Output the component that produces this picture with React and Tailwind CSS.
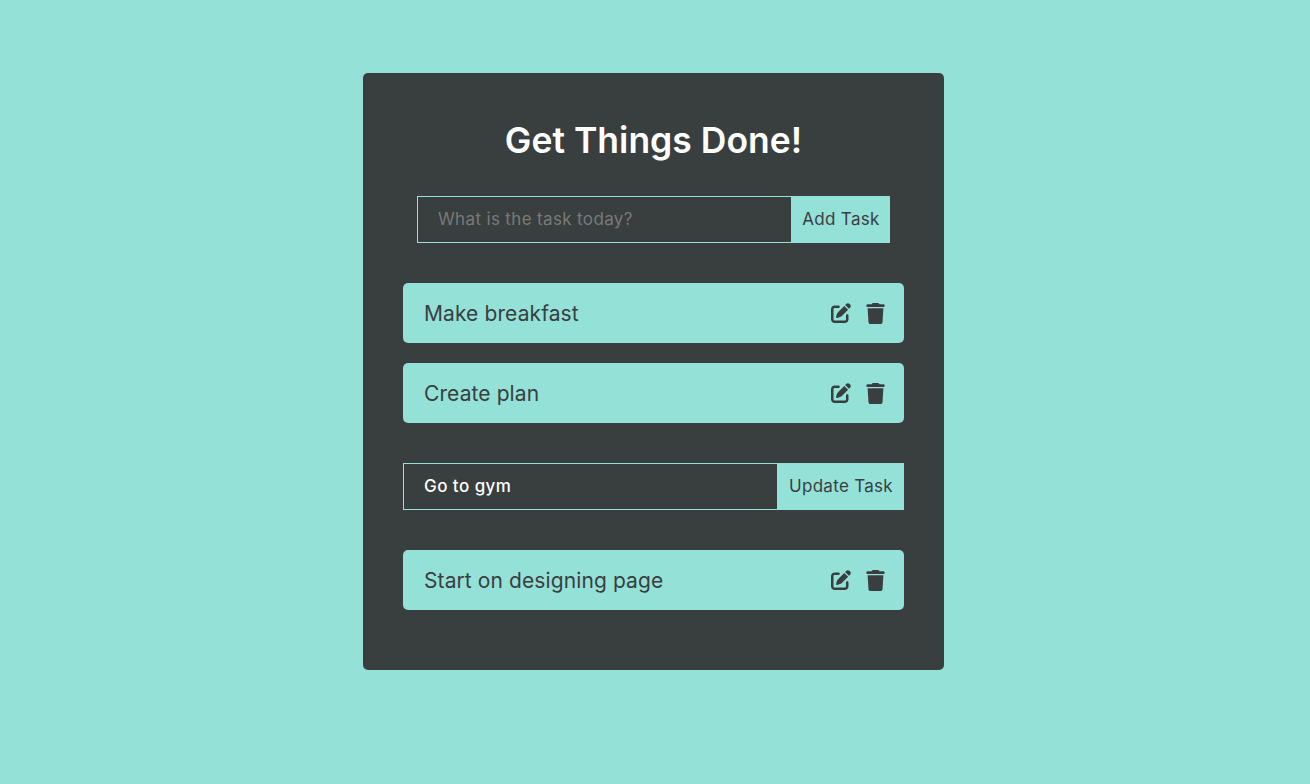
import React from 'react';
import { FaPenToSquare, FaTrash } from 'react-icons/fa6';

const TaskRow = ({ label }) => (
  <div className="flex items-center justify-between h-[60px] rounded-[5px] bg-[#94e1d8] pl-[21px] pr-[19px] text-[#393e3f]">
    <p className="pt-[2px] text-[21px] tracking-[0.1px]">{label}</p>
    <div className="flex items-center gap-[15px]">
      <FaPenToSquare className="w-5 h-5" />
      <FaTrash className="w-[19px] h-[21px]" />
    </div>
  </div>
);

const TaskForm = ({ value, placeholder, button, inputClass, className = '' }) => (
  <form className={`flex h-[47px] ${className}`} onSubmit={(e) => e.preventDefault()}>
    <input
      type="text"
      defaultValue={value}
      placeholder={placeholder}
      className={`h-full shrink-0 bg-transparent border border-[#94e1d8] pl-5 pb-[2px] text-white text-[17px] outline-none placeholder:text-[#7a7a7a] ${inputClass}`}
    />
    <button type="submit" className="h-full flex-1 pt-[1px] bg-[#94e1d8] text-[#393e3f] text-[17px] tracking-[0.3px]">
      {button}
    </button>
  </form>
);

export default function App() {
  return (
    <div className="min-h-[784px] bg-[#94e1d8] pt-[73px] pr-[3px] font-['Inter',sans-serif]">
      <div className="mx-auto w-[581px] h-[597px] rounded-[5px] bg-[#393e3f] px-10 pt-[40px]">
        <h1 className="h-[54px] text-center text-[35.5px] leading-[56px] font-semibold text-white">Get Things Done!</h1>
        <TaskForm
          placeholder="What is the task today?"
          button="Add Task"
          className="mt-[29px] mx-[14px]"
          inputClass="w-[375px] tracking-[0.35px]"
        />
        <div className="mt-10 flex flex-col gap-5">
          <TaskRow label="Make breakfast" />
          <TaskRow label="Create plan" />
        </div>
        <TaskForm
          value="Go to gym"
          button="Update Task"
          className="mt-10"
          inputClass="w-[375px] font-medium tracking-[0.45px]"
        />
        <div className="mt-10">
          <TaskRow label="Start on designing page" />
        </div>
      </div>
    </div>
  );
}
